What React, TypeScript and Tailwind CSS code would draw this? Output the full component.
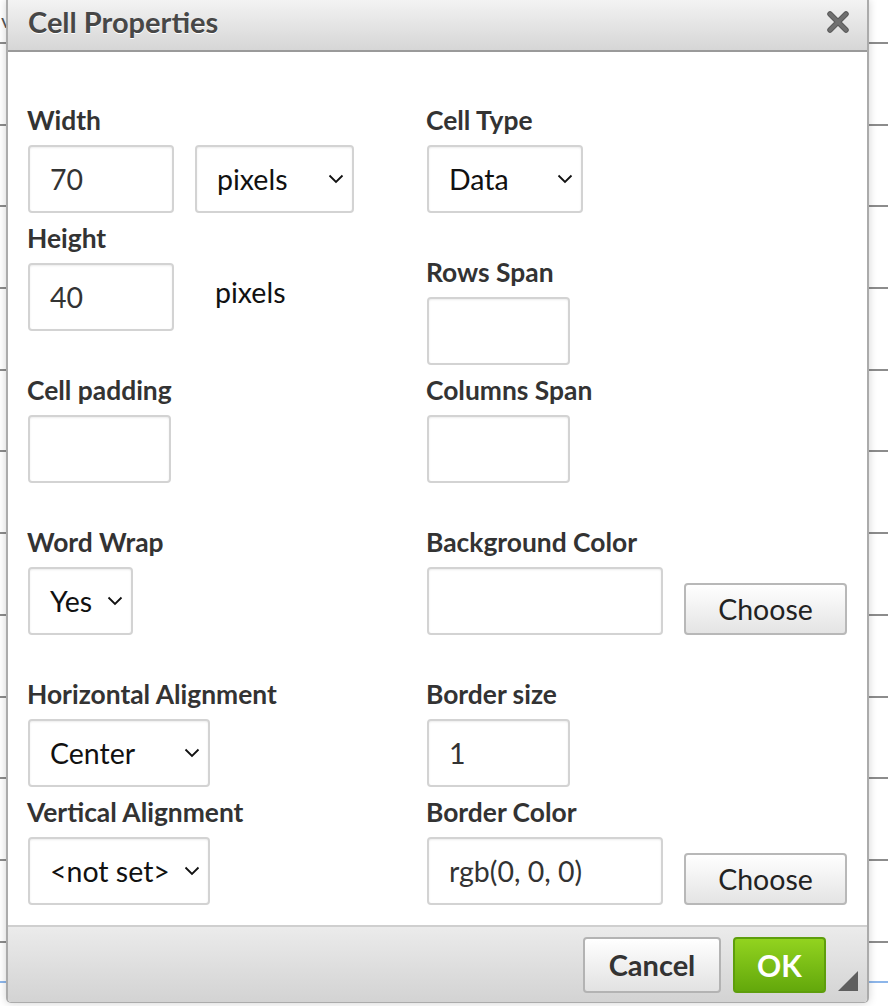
import type { ReactNode } from "react";

const font = "font-['Lato','Open_Sans',sans-serif]";

function Label({ children, className = "" }: { children: ReactNode; className?: string }) {
  return (
    <div className={`-ml-[1px] text-[26.4px] font-bold leading-[27px] text-[#333] ${className}`}>
      {children}
    </div>
  );
}

function TextBox({ w, value = "" }: { w: string; value?: string }) {
  return (
    <div
      className={`${w} flex h-[68px] items-center rounded-[4px] border-2 border-[#d3d3d3] bg-white pl-[20px] text-[28.5px] text-[#333] shadow-[inset_0_1px_2px_rgba(0,0,0,0.08)]`}
    >
      {value}
    </div>
  );
}

function Chevron() {
  return (
    <svg width="16" height="10" viewBox="0 0 16 10" className="shrink-0">
      <path d="M1.5 1.5 L8 8 L14.5 1.5" fill="none" stroke="#111" strokeWidth="1.8" />
    </svg>
  );
}

function Select({ w, value }: { w: string; value: string }) {
  return (
    <div
      className={`${w} flex h-[68px] items-center justify-between rounded-[4px] border-2 border-[#d3d3d3] bg-white pl-[20px] pr-[8px] text-[28.5px] text-[#111] shadow-[inset_0_1px_2px_rgba(0,0,0,0.08)]`}
    >
      <span>{value}</span>
      <Chevron />
    </div>
  );
}

function ChooseButton() {
  return (
    <button className="flex h-[52px] w-[163px] items-center justify-center self-end rounded-[4px] border-2 border-[#b8b8b8] bg-gradient-to-b from-[#ffffff] to-[#e4e4e4] text-[28.5px] text-[#222]">
      Choose
    </button>
  );
}

export default function App() {
  return (
    <div className={`relative h-[1006px] w-[888px] overflow-hidden bg-white ${font}`}>
      {/* page table behind the dialog */}
      <div className="flex flex-col">
        <div className="h-[42px] pl-[1px] pt-[8px] text-[20px] leading-[24px] text-[#555]">v</div>
        {Array.from({ length: 11 }).map((_, i) => (
          <div key={i} className="h-[81.7px] border-t-2 border-[#8c8c8c]" />
        ))}
        <div className="h-[40px] border-t-2 border-[#8c8c8c]" />
        <div className="h-[20px] border-t-2 border-[#8db6ea]" />
      </div>

      {/* dialog */}
      <div className="absolute left-[6px] top-0 flex h-[1003px] w-[863px] flex-col overflow-hidden rounded-b-[5px] border-x-2 border-b border-[#ababab] bg-white shadow-[0_0_8px_rgba(0,0,0,0.18)]">
        <div className="flex h-[52px] shrink-0 items-center justify-between border-b-2 border-[#9a9a9a] bg-gradient-to-b from-[#f3f3f3] to-[#d6d6d6] pl-[20px] pr-[18px]">
          <span className="pb-[6px] text-[29px] font-bold text-[#474747] [text-shadow:0_1px_0_#fff]">
            Cell Properties
          </span>
          <svg width="22" height="22" viewBox="0 0 22 22" className="mb-[6px]">
            <path d="M3 3 L19 19 M19 3 L3 19" stroke="#5a5a5a" strokeWidth="5.5" strokeLinecap="round" />
            <path d="M3 3 L19 19 M19 3 L3 19" stroke="#707070" strokeWidth="3.5" strokeLinecap="round" />
          </svg>
        </div>

        <div className="flex flex-1 pl-[20px] pt-[55px]">
          <div className="flex w-[399px] flex-col">
            <Label>Width</Label>
            <div className="mt-[11px] flex gap-[21px]">
              <TextBox w="w-[146px]" value="70" />
              <Select w="w-[159px]" value="pixels" />
            </div>

            <Label className="mt-[12px]">Height</Label>
            <div className="mt-[11px] flex items-start gap-[41px]">
              <TextBox w="w-[146px]" value="40" />
              <span className="pt-[14px] text-[28.5px] leading-[30px] text-[#111]">pixels</span>
            </div>

            <Label className="mt-[46px]">Cell padding</Label>
            <div className="mt-[11px]">
              <TextBox w="w-[143px]" />
            </div>

            <Label className="mt-[46px]">Word Wrap</Label>
            <div className="mt-[11px]">
              <Select w="w-[105px]" value="Yes" />
            </div>

            <Label className="mt-[46px]">Horizontal Alignment</Label>
            <div className="mt-[11px]">
              <Select w="w-[182px]" value="Center" />
            </div>

            <Label className="mt-[12px]">Vertical Alignment</Label>
            <div className="mt-[11px]">
              <Select w="w-[182px]" value="<not set>" />
            </div>
          </div>

          <div className="flex flex-col">
            <Label>Cell Type</Label>
            <div className="mt-[11px]">
              <Select w="w-[156px]" value="Data" />
            </div>

            <Label className="mt-[46px]">Rows Span</Label>
            <div className="mt-[11px]">
              <TextBox w="w-[143px]" />
            </div>

            <Label className="mt-[12px]">Columns Span</Label>
            <div className="mt-[11px]">
              <TextBox w="w-[143px]" />
            </div>

            <Label className="mt-[46px]">Background Color</Label>
            <div className="mt-[11px] flex gap-[21px]">
              <TextBox w="w-[236px]" />
              <ChooseButton />
            </div>

            <Label className="mt-[46px]">Border size</Label>
            <div className="mt-[11px]">
              <TextBox w="w-[143px]" value="1" />
            </div>

            <Label className="mt-[12px]">Border Color</Label>
            <div className="mt-[11px] flex gap-[21px]">
              <TextBox w="w-[236px]" value="rgb(0, 0, 0)" />
              <ChooseButton />
            </div>
          </div>
        </div>

        <div className="relative flex h-[77px] shrink-0 items-start justify-end gap-[12px] border-t-2 border-[#cfcfcf] bg-gradient-to-b from-[#ebebeb] to-[#d3d3d3] pr-[41px] pt-[10px]">
          <button className="flex h-[56px] w-[138px] items-center justify-center rounded-[4px] border-2 border-[#b3b3b3] bg-gradient-to-b from-[#ffffff] to-[#e2e2e2] text-[29px] font-bold text-[#333]">
            Cancel
          </button>
          <button className="flex h-[56px] w-[93px] items-center justify-center rounded-[4px] border-2 border-[#5e9e0c] bg-gradient-to-b from-[#92d31f] to-[#63a80b] text-[30px] font-bold text-white">
            OK
          </button>
          <svg width="20" height="20" viewBox="0 0 20 20" className="absolute bottom-[11px] right-[9px]">
            <path d="M20 0 L20 20 L0 20 Z" fill="#5f5f5f" />
          </svg>
        </div>
      </div>
    </div>
  );
}
